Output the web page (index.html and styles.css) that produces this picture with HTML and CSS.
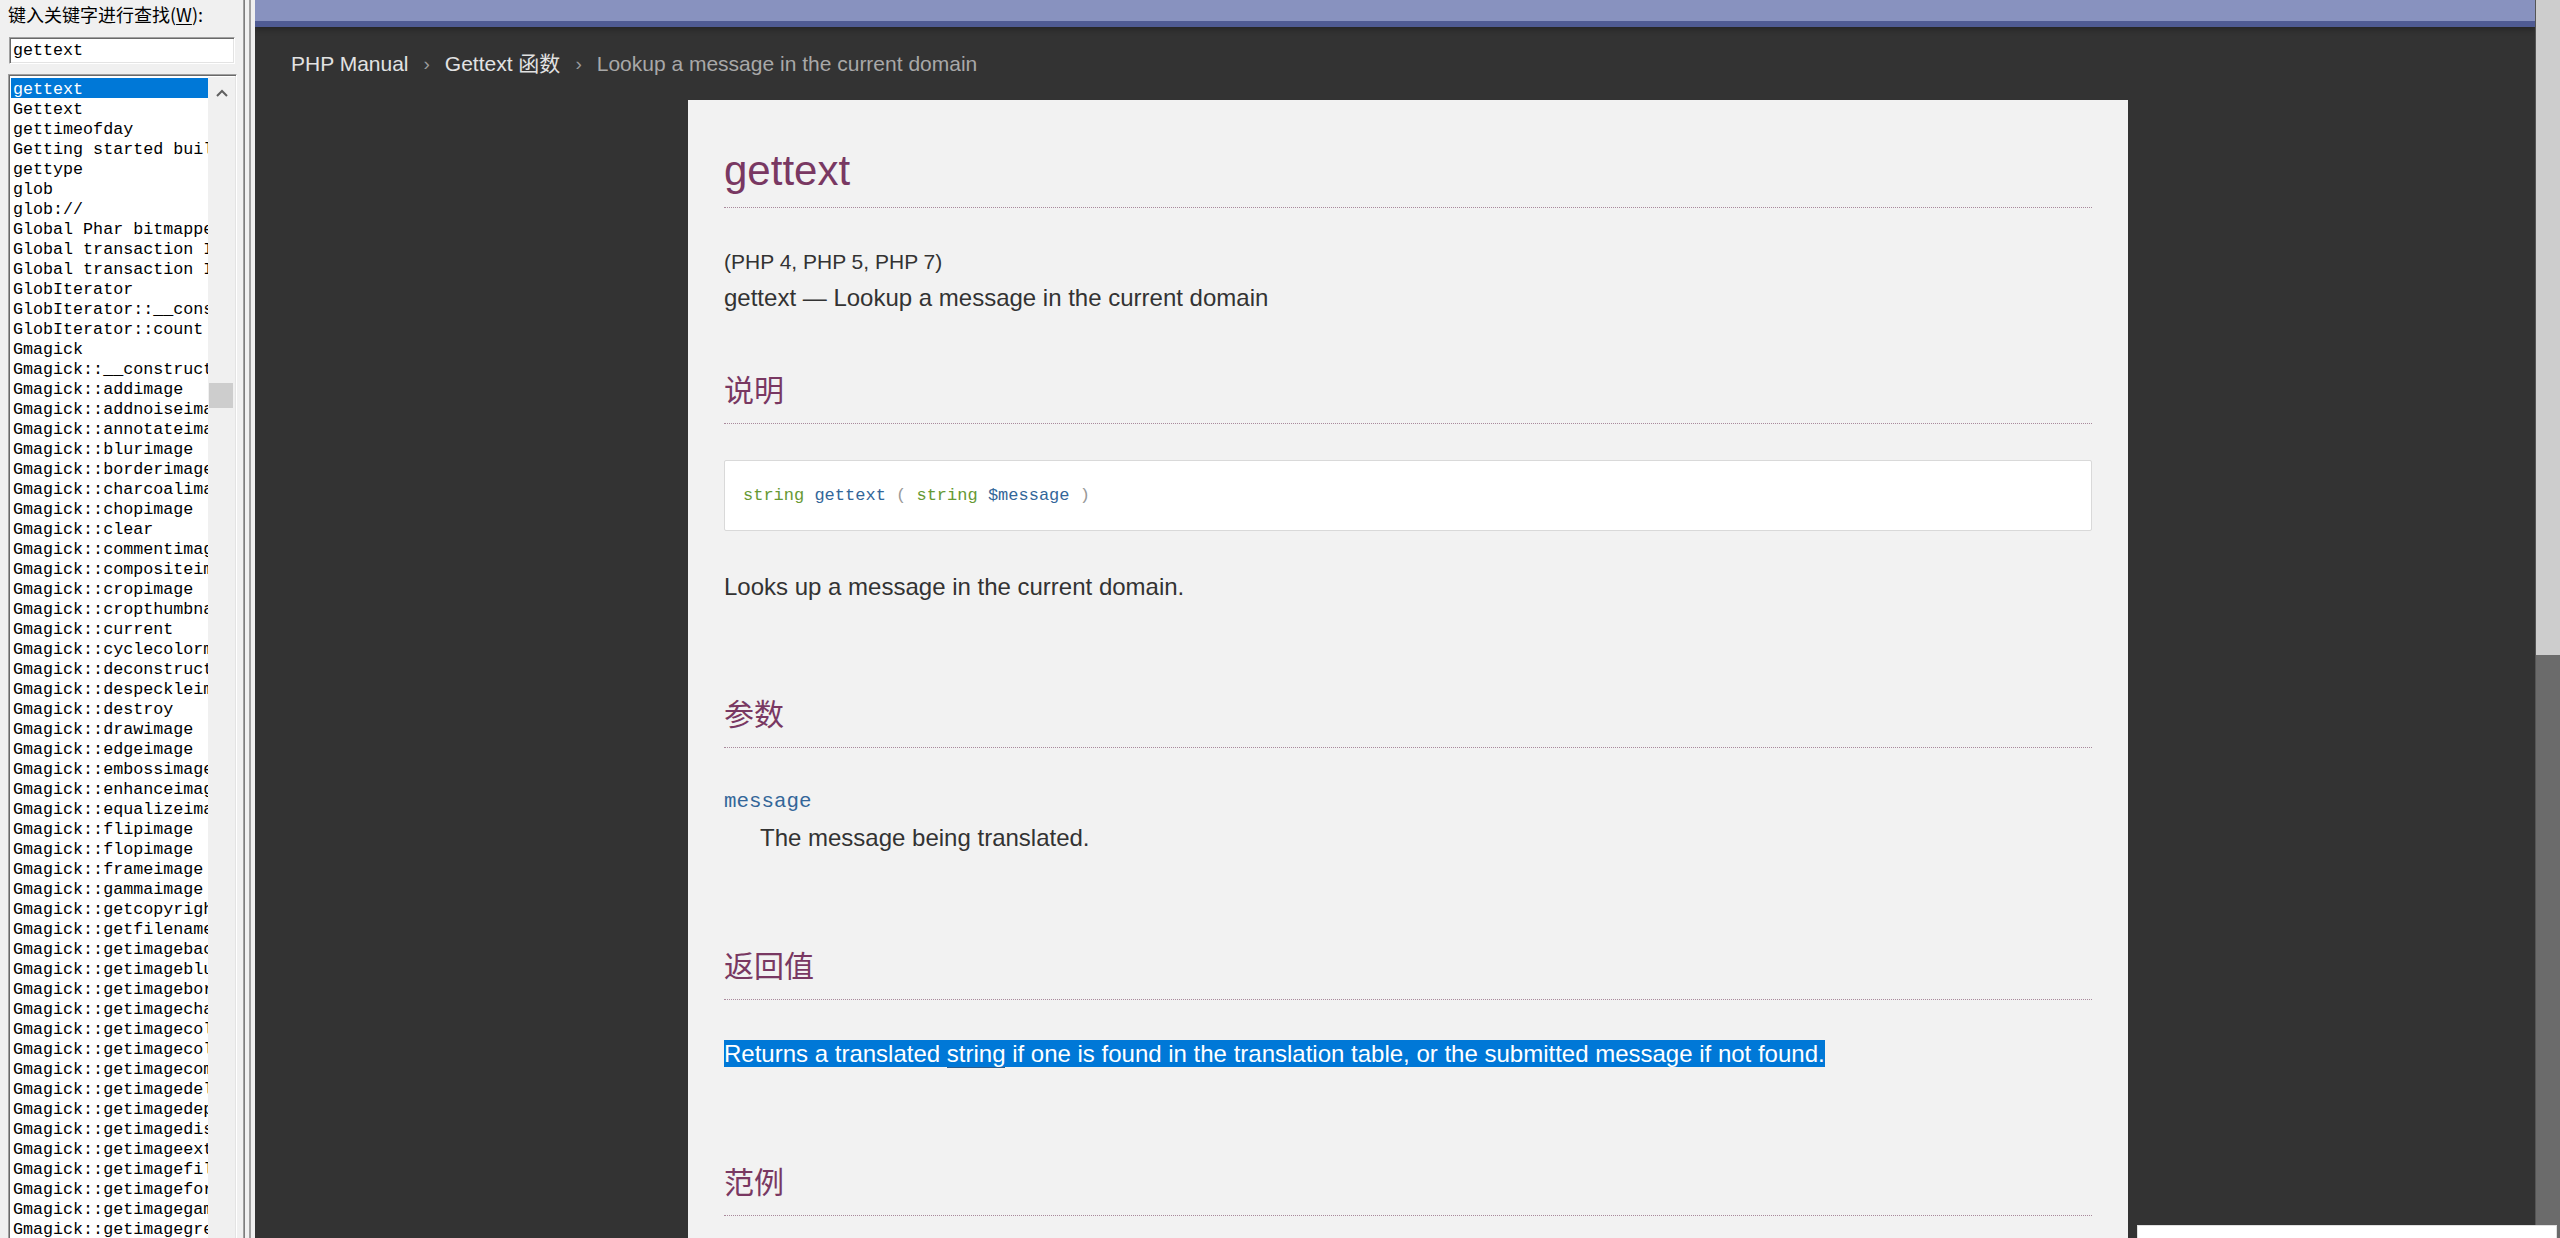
FILE: index.html
```html
<!DOCTYPE html>
<html lang="zh-CN">
<head>
<meta charset="utf-8">
<title>gettext - PHP Manual</title>
<link rel="stylesheet" href="styles.css">
</head>
<body>
<div class="app">
  <aside class="side">
    <div class="side-label">键入关键字进行查找(<u>W</u>):</div>
    <div class="search">gettext</div>
    <div class="list">
      <div class="rows">
        <div class="row sel">gettext</div>
        <div class="row">Gettext</div>
        <div class="row">gettimeofday</div>
        <div class="row">Getting started building</div>
        <div class="row">gettype</div>
        <div class="row">glob</div>
        <div class="row">glob://</div>
        <div class="row">Global Phar bitmapped flags</div>
        <div class="row">Global transaction IDs</div>
        <div class="row">Global transaction IDs</div>
        <div class="row">GlobIterator</div>
        <div class="row">GlobIterator::__construct</div>
        <div class="row">GlobIterator::count</div>
        <div class="row">Gmagick</div>
        <div class="row">Gmagick::__construct</div>
        <div class="row">Gmagick::addimage</div>
        <div class="row">Gmagick::addnoiseimage</div>
        <div class="row">Gmagick::annotateimage</div>
        <div class="row">Gmagick::blurimage</div>
        <div class="row">Gmagick::borderimage</div>
        <div class="row">Gmagick::charcoalimage</div>
        <div class="row">Gmagick::chopimage</div>
        <div class="row">Gmagick::clear</div>
        <div class="row">Gmagick::commentimage</div>
        <div class="row">Gmagick::compositeimage</div>
        <div class="row">Gmagick::cropimage</div>
        <div class="row">Gmagick::cropthumbnailimage</div>
        <div class="row">Gmagick::current</div>
        <div class="row">Gmagick::cyclecolormapimage</div>
        <div class="row">Gmagick::deconstructimages</div>
        <div class="row">Gmagick::despeckleimage</div>
        <div class="row">Gmagick::destroy</div>
        <div class="row">Gmagick::drawimage</div>
        <div class="row">Gmagick::edgeimage</div>
        <div class="row">Gmagick::embossimage</div>
        <div class="row">Gmagick::enhanceimage</div>
        <div class="row">Gmagick::equalizeimage</div>
        <div class="row">Gmagick::flipimage</div>
        <div class="row">Gmagick::flopimage</div>
        <div class="row">Gmagick::frameimage</div>
        <div class="row">Gmagick::gammaimage</div>
        <div class="row">Gmagick::getcopyright</div>
        <div class="row">Gmagick::getfilename</div>
        <div class="row">Gmagick::getimagebackgroundcolor</div>
        <div class="row">Gmagick::getimageblueprimary</div>
        <div class="row">Gmagick::getimagebordercolor</div>
        <div class="row">Gmagick::getimagechanneldepth</div>
        <div class="row">Gmagick::getimagecolors</div>
        <div class="row">Gmagick::getimagecolorspace</div>
        <div class="row">Gmagick::getimagecompose</div>
        <div class="row">Gmagick::getimagedelay</div>
        <div class="row">Gmagick::getimagedepth</div>
        <div class="row">Gmagick::getimagedispose</div>
        <div class="row">Gmagick::getimageextrema</div>
        <div class="row">Gmagick::getimagefilename</div>
        <div class="row">Gmagick::getimageformat</div>
        <div class="row">Gmagick::getimagegamma</div>
        <div class="row">Gmagick::getimagegreenprimary</div>
      </div>
      <div class="lsb">
        <div class="lsb-up">
          <svg width="12" height="8" viewBox="0 0 12 8"><polyline points="1,7 6,2 11,7" fill="none" stroke="#606060" stroke-width="2"/></svg>
        </div>
        <div class="lsb-thumb"></div>
      </div>
    </div>
  </aside>
  <div class="splitter"></div>
  <main class="main">
    <div class="page">
      <div class="header"></div>
      <nav class="crumbs">
        <span class="crumb">PHP Manual</span>
        <span class="sep">›</span>
        <span class="crumb">Gettext 函数</span>
        <span class="sep">›</span>
        <span class="crumb current">Lookup a message in the current domain</span>
      </nav>
      <article class="doc">
        <h1 class="title">gettext</h1>
        <p class="verinfo">(PHP 4, PHP 5, PHP 7)</p>
        <p class="purpose">gettext — Lookup a message in the current domain</p>

        <h2 class="sect">说明</h2>
        <div class="synopsis"><span class="type">string</span> <span class="fn">gettext</span> <span class="paren">(</span> <span class="type">string</span> <span class="var">$message</span> <span class="paren">)</span></div>
        <p class="para">Looks up a message in the current domain.</p>

        <h2 class="sect s2">参数</h2>
        <div class="param-term">message</div>
        <p class="param-desc">The message being translated.</p>

        <h2 class="sect s3">返回值</h2>
        <p class="returns"><span class="hl">Returns a translated <span class="link">string</span> if one is found in the translation table, or the submitted message if not found.</span></p>

        <h2 class="sect s3">范例</h2>
      </article>
    </div>
    <div class="vscroll"><div class="vthumb"></div></div>
  </main>
</div>
<div class="popup"></div>
</body>
</html>
```
FILE: styles.css
```css
html, body {
  margin: 0;
  padding: 0;
  overflow: hidden;
}
html {
  height: 1238px;
}
body {
  width: 2560px;
  height: 1238px;
  position: relative;
  font-family: "Liberation Sans", "Noto Sans CJK SC", sans-serif;
  background: #333333;
}
.app {
  display: flex;
  height: 1238px;
  overflow: hidden;
}

/* ---------- left index panel ---------- */
.side {
  width: 243px;
  height: 1238px;
  flex: none;
  box-sizing: border-box;
  background: #f0f0f0;
  padding: 1px 0 0 8px;
  overflow: hidden;
}
.side-label {
  font-family: "Noto Sans CJK SC", sans-serif;
  font-size: 18px;
  line-height: 26px;
  color: #000;
  white-space: nowrap;
}
.side-label u {
  text-decoration: underline;
  text-underline-offset: 2px;
}
.search {
  margin: 10px 0 0 1px;
  width: 226px;
  height: 27px;
  box-sizing: border-box;
  background: #fff;
  border: 1px solid;
  border-color: #a0a0a0 #ffffff #ffffff #a0a0a0;
  box-shadow: inset 1px 1px 0 #696969, inset -1px -1px 0 #e3e3e3;
  padding: 0 0 0 3px;
  font-family: "Liberation Mono", monospace;
  font-size: 16.7px;
  line-height: 25px;
  color: #000;
}
.list {
  margin-top: 10px;
  width: 229px;
  height: 1200px;
  box-sizing: border-box;
  border: 1px solid;
  border-color: #a0a0a0 #ffffff #ffffff #a0a0a0;
  box-shadow: inset 1px 1px 0 #696969, inset -1px -1px 0 #e3e3e3;
  padding: 2px 1px 0 2px;
  background: #fff;
  display: flex;
  overflow: hidden;
}
.rows {
  width: 197px;
  flex: none;
  overflow: hidden;
  padding-top: 1px;
}
.row {
  height: 20px;
  box-sizing: border-box;
  padding: 3px 0 0 2px;
  font-family: "Liberation Mono", monospace;
  font-size: 16.7px;
  line-height: 17px;
  color: #000;
  white-space: nowrap;
  overflow: hidden;
}
.row.sel {
  background: #0078d7;
  color: #fff;
}
.lsb {
  width: 27px;
  flex: none;
  background: #f0f0f0;
  padding-top: 1px;
  display: flex;
  flex-direction: column;
}
.lsb-up {
  height: 30px;
  display: flex;
  align-items: center;
  justify-content: center;
}
.lsb-thumb {
  margin: 275px 0 0 1px;
  width: 24px;
  height: 25px;
  background: #cdcdcd;
}

/* splitter */
.splitter {
  width: 12px;
  flex: none;
  background: linear-gradient(to right,
    #a0a0a0 0 1px, #7d7d7d 1px 2px,
    #f0f0f0 2px 6px,
    #a0a0a0 6px 8px,
    #f0f0f0 8px 12px);
}

/* ---------- main browser pane ---------- */
.main {
  flex: 1;
  display: flex;
  min-width: 0;
}
.page {
  flex: 1;
  min-width: 0;
  background: #333333;
  overflow: hidden;
}
.header {
  height: 21px;
  background: #8892bf;
  border-bottom: 6px solid #4f5b93;
  box-shadow: 0 2px 6px rgba(0, 0, 0, 0.35);
}
.crumbs {
  margin-top: 22px;
  padding-left: 36px;
  height: 30px;
  display: flex;
  align-items: center;
  font-size: 21px;
  line-height: 30px;
  white-space: nowrap;
}
.crumb {
  color: #e2e2e2;
}
.crumb.current {
  color: #a8a8a8;
}
.sep {
  color: #9a9a9a;
  margin: 0 15px;
  font-size: 19px;
}

.doc {
  margin: 21px 0 0 433px;
  width: 1440px;
  height: 1140px;
  box-sizing: border-box;
  background: #f2f2f2;
  padding: 50px 36px 0 36px;
  color: #333;
  overflow: hidden;
}
.title {
  margin: 0;
  font-size: 42px;
  line-height: 42px;
  font-weight: normal;
  color: #793862;
  padding-bottom: 15px;
  border-bottom: 1px dotted #a98a9c;
}
.verinfo {
  margin: 39px 0 0;
  font-size: 21px;
  line-height: 30px;
}
.purpose {
  margin: 3px 0 0;
  font-size: 24px;
  line-height: 36px;
}
.sect {
  margin: 52px 0 0;
  font-family: "Noto Sans CJK SC", sans-serif;
  font-size: 30px;
  line-height: 40px;
  font-weight: normal;
  color: #793862;
  padding-bottom: 15px;
  border-bottom: 1px dotted #a98a9c;
}
.sect.s2 {
  margin-top: 87px;
}
.sect.s3 {
  margin-top: 88px;
}
.synopsis {
  margin-top: 36px;
  height: 71px;
  box-sizing: border-box;
  background: #fff;
  border: 1px solid #d9d9d9;
  border-radius: 2px;
  padding: 0 18px;
  font-family: "Liberation Mono", monospace;
  font-size: 17px;
  line-height: 69px;
  white-space: nowrap;
}
.type { color: #669933; }
.fn { color: #336699; }
.var { color: #336699; }
.paren { color: #999999; }
.para {
  margin: 38px 0 0;
  font-size: 24px;
  line-height: 36px;
}
.param-term {
  margin-top: 39px;
  font-family: "Liberation Mono", monospace;
  font-size: 20.8px;
  line-height: 30px;
  color: #336699;
}
.param-desc {
  margin: 3px 0 0 36px;
  font-size: 24px;
  line-height: 36px;
}
.returns {
  margin: 36px 0 0;
  font-size: 24px;
  line-height: 36px;
}
.hl {
  background: #0078d7;
  color: #fff;
}
.link {
  border-bottom: 1px solid #2a5d8f;
}

/* page scrollbar */
.vscroll {
  width: 25px;
  flex: none;
  box-sizing: border-box;
  background: #6b6b6b;
  border-left: 1px solid #555;
}
.vthumb {
  height: 655px;
  background: #cdcdcd;
}

/* small overlay at the bottom right */
.popup {
  position: absolute;
  left: 2137px;
  top: 1225px;
  width: 420px;
  height: 13px;
  background: #fff;
  box-sizing: border-box;
  border: 1px solid #e0e0e0;
  border-bottom: 0;
}
```
